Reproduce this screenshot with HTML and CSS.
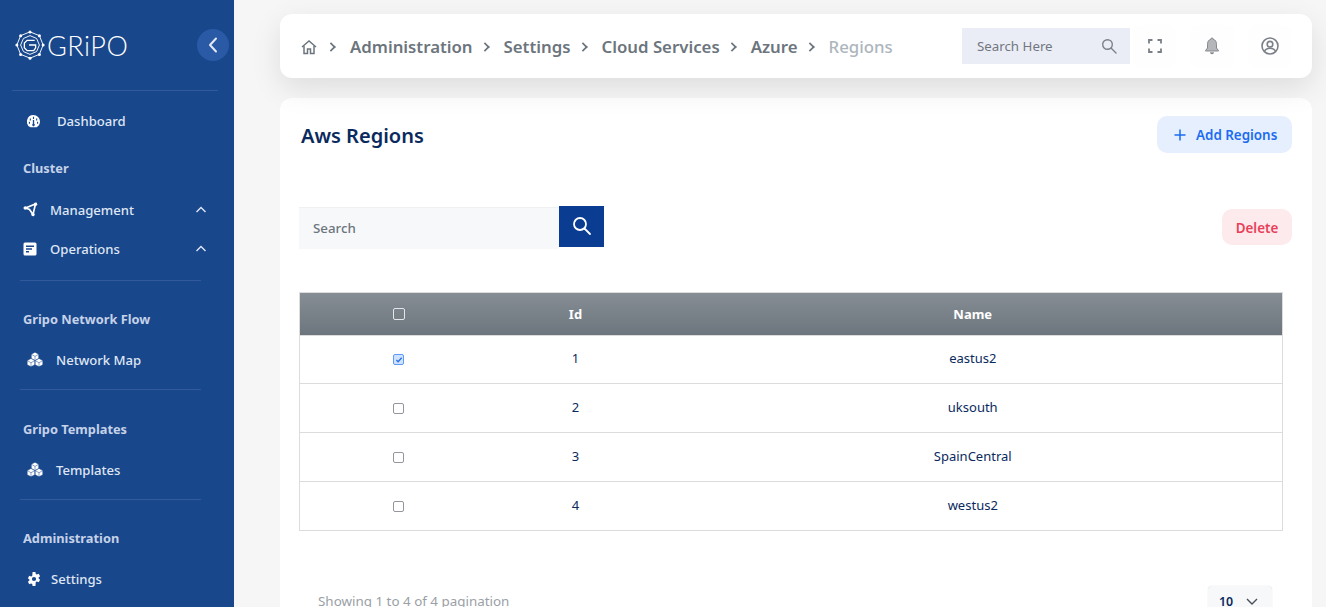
FILE: index.html
```html
<!DOCTYPE html>
<html>
<head>
	<meta charset="utf-8">
	<title>Aws Regions</title>
	<link rel="stylesheet" href="styles.css">
</head>
<body>
	<div class="layout">
		<aside class="sidebar">
			<div class="brand">
				<svg class="brand-mark" width="30" height="30" viewBox="0 0 32 32" fill="none" stroke="#fff" stroke-width="1">
					<polygon points="16,2 26,6 30,16 26,26 16,30 6,26 2,16 6,6"/>
					<polygon points="16,6 23,9 26,16 23,23 16,26 9,23 6,16 9,9"/>
					<path d="M21 11H13L10 14V19L13 22H20L22 19V16H15" stroke-width="1.4"/>
					<g fill="#fff" stroke="none">
						<circle cx="16" cy="2" r="1.6"/><circle cx="26" cy="6" r="1.6"/><circle cx="30" cy="16" r="1.6"/><circle cx="26" cy="26" r="1.6"/>
						<circle cx="16" cy="30" r="1.6"/><circle cx="6" cy="26" r="1.6"/><circle cx="2" cy="16" r="1.6"/><circle cx="6" cy="6" r="1.6"/>
					</g>
				</svg>
				<span class="brand-name">GRiPO</span>
				<button class="collapse">
					<svg width="12" height="16" viewBox="0 0 12 16" fill="none" stroke="#e3eaf6" stroke-width="2" stroke-linecap="round" stroke-linejoin="round"><path d="M9 1.500L3 8l6 6.500"/></svg>
				</button>
			</div>

			<div class="group group-first">
				<a class="item item-dash">
					<svg class="ico" width="13" height="13" viewBox="0 0 14 14"><path fill="#fff" fill-rule="evenodd" d="M7 0a7 7 0 0 1 7 7c0 2.700-1.500 5-3.700 6.200H3.700A7 7 0 0 1 7 0zM6.400 1.800v2.400h1.200V1.800zM3 3.800v2h1.200v-2zM9.800 3.800v2H11v-2zM2 7.300v2h1.200v-2zM10.800 7.300v2H12v-2zM6.300 5.500v4a1.300 1.300 0 1 0 1.400 0v-4z"/></svg>
					<span>Dashboard</span>
				</a>
				<div class="title title-cluster">Cluster</div>
				<a class="item item-man">
					<svg class="ico" width="15" height="15" viewBox="0 0 15 15" fill="none" stroke="#fff" stroke-width="1.700"><path d="M2.500 6L12.500 2L10 12.500L6.500 7.500Z"/><circle cx="12.500" cy="2.300" r="1.700" fill="#fff" stroke="none"/><circle cx="2.300" cy="6" r="1.700" fill="#fff" stroke="none"/><circle cx="10" cy="12.500" r="1.700" fill="#fff" stroke="none"/></svg>
					<span>Management</span>
					<svg class="caret" width="12" height="7" viewBox="0 0 12 7" fill="none" stroke="#dfe6f3" stroke-width="1.400"><path d="M1.500 6L6 1.500 10.500 6"/></svg>
				</a>
				<a class="item item-ops">
					<svg class="ico" width="14" height="14" viewBox="0 0 14 14"><path fill="#fff" fill-rule="evenodd" d="M2 .5h10A1.500 1.500 0 0 1 13.500 2v10a1.500 1.500 0 0 1-1.500 1.500H2A1.500 1.500 0 0 1 .5 12V2A1.500 1.500 0 0 1 2 .5zM3 3.500V5h8V3.500zM3 6.300v1.500h6V6.300zM3 9.100v1.500h3V9.100z"/></svg>
					<span>Operations</span>
					<svg class="caret" width="12" height="7" viewBox="0 0 12 7" fill="none" stroke="#dfe6f3" stroke-width="1.400"><path d="M1.500 6L6 1.500 10.500 6"/></svg>
				</a>
			</div>

			<div class="group">
				<div class="title">Gripo Network Flow</div>
				<a class="item item-cube">
					<svg class="ico" width="16" height="15" viewBox="0 0 16 15" fill="#fff" stroke="#19478c" stroke-width="0.500">
						<path d="M8 .2l3.700 2.100v4.200L8 8.600 4.300 6.500V2.300z"/><path d="M4.300 2.300L8 4.400l3.700-2.100M8 4.400v4.200" fill="none"/>
						<path d="M4 6.400l3.800 2.200v4.100L4 14.800.2 12.700V8.600z"/><path d="M.2 8.600L4 10.700l3.800-2.100M4 10.700v4.100" fill="none"/>
						<path d="M12 6.400l3.800 2.200v4.100L12 14.800l-3.800-2.100V8.600z"/><path d="M8.200 8.600l3.800 2.100 3.800-2.100M12 10.700v4.100" fill="none"/>
					</svg>
					<span>Network Map</span>
				</a>
			</div>

			<div class="group group-mid">
				<div class="title">Gripo Templates</div>
				<a class="item item-cube">
					<svg class="ico" width="16" height="15" viewBox="0 0 16 15" fill="#fff" stroke="#19478c" stroke-width="0.500">
						<path d="M8 .2l3.700 2.100v4.200L8 8.600 4.300 6.500V2.300z"/><path d="M4.300 2.300L8 4.400l3.700-2.100M8 4.400v4.200" fill="none"/>
						<path d="M4 6.400l3.800 2.200v4.100L4 14.800.2 12.700V8.600z"/><path d="M.2 8.600L4 10.700l3.800-2.100M4 10.700v4.100" fill="none"/>
						<path d="M12 6.400l3.800 2.200v4.100L12 14.800l-3.800-2.100V8.600z"/><path d="M8.200 8.600l3.800 2.100 3.800-2.100M12 10.700v4.100" fill="none"/>
					</svg>
					<span>Templates</span>
				</a>
			</div>

			<div class="group group-last">
				<div class="title">Administration</div>
				<a class="item item-gear">
					<svg class="ico" width="14" height="14" viewBox="0 0 14 14">
						<path fill="#fff" fill-rule="evenodd" d="M5.600 0h2.800l.4 1.900 1.100.6 1.800-.7 1.400 2.400-1.500 1.300v1l1.500 1.300-1.400 2.400-1.800-.7-1.100.6L8.400 14H5.600l-.4-1.900-1.100-.6-1.800.7L.9 9.800l1.500-1.300v-1L.9 6.200l1.400-2.400 1.800.7 1.100-.6zM7 4.900a2.100 2.100 0 1 0 0 4.200 2.100 2.100 0 0 0 0-4.200z"/>
					</svg>
					<span>Settings</span>
				</a>
			</div>
		</aside>

		<main class="main">
			<header class="topbar">
				<nav class="crumbs">
					<svg class="crumb-home" width="16" height="16" viewBox="0 0 16 16" fill="none" stroke="#6c757d" stroke-width="1.500"><path d="M1 8l7-6 7 6"/><path d="M3 7v7.500h3.500V10h3v4.500H13V7"/></svg>
					<span class="sep"></span>
					<a>Administration</a>
					<span class="sep"></span>
					<a>Settings</a>
					<span class="sep"></span>
					<a>Cloud Services</a>
					<span class="sep"></span>
					<a>Azure</a>
					<span class="sep"></span>
					<a class="crumb-now">Regions</a>
				</nav>
				<div class="top-search">
					<span>Search Here</span>
					<svg width="16" height="16" viewBox="0 0 16 16" fill="none" stroke="#7b8088" stroke-width="1.400"><circle cx="6.500" cy="6.500" r="4.800"/><path d="M10 10l5 5" stroke-linecap="round"/></svg>
				</div>
				<div class="top-icons">
					<button class="top-btn">
						<svg width="14" height="14" viewBox="0 0 14 14" fill="none" stroke="#7b8088" stroke-width="1.800"><path d="M1 4.500V1h3.500M9.500 1H13v3.500M13 9.500V13H9.500M4.500 13H1V9.500"/></svg>
					</button>
					<button class="top-btn">
						<svg width="16" height="18" viewBox="0 0 16 18"><path fill="#b4b6ba" stroke="#85888e" stroke-width="1" d="M8 1a1 1 0 0 1 1 1.200C11.600 2.800 12.500 5 12.500 7.500V11l2 2.500v.5h-13v-.5l2-2.500V7.500C3.500 5 4.400 2.800 7 2.200A1 1 0 0 1 8 1z"/><path fill="#85888e" d="M6 15.300h4a2 2 0 0 1-4 0z"/></svg>
					</button>
					<button class="top-btn">
						<svg width="18" height="18" viewBox="0 0 18 18" fill="none" stroke="#7b8088" stroke-width="1.600"><circle cx="9" cy="9" r="8"/><circle cx="9" cy="7.200" r="2.800"/><path d="M3.500 14.500c1-2.500 3-3.200 5.500-3.200s4.500.7 5.500 3.200"/></svg>
					</button>
				</div>
			</header>

			<section class="card">
				<div class="card-head">
					<h1>Aws Regions</h1>
					<button class="btn-add">
						<svg width="12" height="12" viewBox="0 0 12 12" stroke="#1a6cf0" stroke-width="1.500"><path d="M6 .5v11M.5 6h11"/></svg>
						<span>Add Regions</span>
					</button>
				</div>

				<div class="tools">
					<div class="search">
						<div class="search-box">Search</div>
						<button class="search-btn">
							<svg width="20" height="20" viewBox="0 0 20 20" fill="none" stroke="#fff" stroke-width="1.800"><circle cx="8" cy="8" r="6"/><path d="M12.500 12.500L18 18" stroke-linecap="round"/></svg>
						</button>
					</div>
					<button class="btn-del">Delete</button>
				</div>

				<table class="grid">
					<thead>
						<tr>
							<th class="c-check"><span class="check check-head"></span></th>
							<th class="c-id">Id</th>
							<th class="c-name">Name</th>
						</tr>
					</thead>
					<tbody>
						<tr class="row-first">
							<td><span class="check check-on"><svg width="8" height="8" viewBox="0 0 9 9" fill="none" stroke="#2a6ee0" stroke-width="1.400"><path d="M1.500 4.500l2 2 4-4.500"/></svg></span></td>
							<td>1</td>
							<td class="c-name">eastus2</td>
						</tr>
						<tr>
							<td><span class="check"></span></td>
							<td>2</td>
							<td class="c-name">uksouth</td>
						</tr>
						<tr>
							<td><span class="check"></span></td>
							<td>3</td>
							<td class="c-name">SpainCentral</td>
						</tr>
						<tr>
							<td><span class="check"></span></td>
							<td>4</td>
							<td class="c-name">westus2</td>
						</tr>
					</tbody>
				</table>

				<div class="foot">
					<span class="foot-info">Showing 1 to 4 of 4 pagination</span>
					<div class="page-size">
						<span>10</span>
						<svg width="12" height="7" viewBox="0 0 12 7" fill="none" stroke="#4a4f57" stroke-width="1.400"><path d="M1 1l5 5 5-5"/></svg>
					</div>
				</div>
			</section>
		</main>
	</div>
</body>
</html>
```

FILE: styles.css
```css
*{
	margin: 0;
	padding: 0;
	box-sizing: border-box;
}

html,body{
	height: 100%;
	overflow: hidden;
}
body{
	font-family: "Noto Sans", "Open Sans", sans-serif;
	background: #f6f6f6;
}
button{
	border: 0;
	font-family: inherit;
	background: none;
}

.layout{
	display: flex;
	height: 607px;
	overflow: hidden;
}

/* sidebar */
.sidebar{
	width: 234px;
	flex: none;
	background: #19478c;
	overflow: hidden;
}
.brand{
	display: flex;
	align-items: center;
	height: 91px;
	margin: 0 16px 0 12px;
	padding-left: 3px;
	border-bottom: 1px solid #31599b;
}
.brand-name{
	margin-left: 2px;
	font-family: "Lato", sans-serif;
	font-size: 27px;
	font-weight: 300;
	letter-spacing: 0.5px;
	color: #fff;
}
.collapse{
	display: flex;
	align-items: center;
	justify-content: center;
	width: 32px;
	height: 32px;
	margin-left: auto;
	margin-right: -11px;
	border-radius: 50%;
	background: #2a5aa5;
}

.group{
	margin: 0 33px 0 20px;
	padding: 23px 0 10px;
	border-bottom: 1px solid #31599b;
}
.group-first{
	padding-top: 10px;
	padding-bottom: 12px;
}
.group-mid{
	padding-top: 24px;
}
.group-last{
	border-bottom: 0;
}
.title{
	display: flex;
	align-items: center;
	height: 30px;
	margin-bottom: 6px;
	padding-left: 3px;
	font-size: 12.8px;
	font-weight: 700;
	color: #c5d2e8;
}
.title-cluster{
	margin-top: 12px;
	margin-bottom: 7px;
}
.item{
	display: flex;
	align-items: center;
	height: 39px;
	font-size: 13.1px;
	font-weight: 500;
	color: #dfe6f3;
}
.item-dash{
	padding-left: 7px;
	height: 40px;
}
.item-dash span{
	margin-left: 17px;
}
.item-man{
	padding-left: 3px;
}
.item-man span{
	margin-left: 12px;
}
.item-ops{
	padding-left: 3px;
}
.item-ops span{
	margin-left: 13px;
}
.item-cube{
	padding-left: 7px;
}
.item-cube span{
	margin-left: 13px;
}
.item-gear{
	padding-left: 7px;
}
.item-gear span{
	margin-left: 10px;
}
.caret{
	margin-left: auto;
	margin-right: -6px;
}

/* main */
.main{
	flex: 1;
	padding: 14px 14px 0 46px;
	min-width: 0;
}
.topbar{
	position: relative;
	z-index: 1;
	display: flex;
	align-items: center;
	height: 64px;
	padding-left: 21px;
	background: #fff;
	border-radius: 12px;
	box-shadow: 0 10px 30px rgba(0,0,0,0.1);
}
.crumbs{
	display: flex;
	align-items: center;
	flex: 1;
	font-size: 16.8px;
	font-weight: 600;
	color: #6c757d;
}
.crumb-home{
	margin-top: 2px;
	margin-right: 2px;
}
.sep{
	width: 8px;
	height: 8px;
	margin: 0 15px 0 8px;
	border-top: 2px solid #6c757d;
	border-right: 2px solid #6c757d;
	transform: translateY(1px) scale(0.85) rotate(45deg);
}
.crumb-now{
	font-weight: 500;
	color: #adb5bd;
}
.top-search{
	display: flex;
	align-items: center;
	justify-content: space-between;
	width: 168px;
	height: 36px;
	padding: 0 13px 0 15px;
	background: #eaedf5;
	font-size: 13.3px;
	color: #72777f;
}
.top-icons{
	display: flex;
	align-items: center;
	gap: 14.5px;
	margin: 0 21px 0 3px;
}
.top-btn{
	display: flex;
	align-items: center;
	justify-content: center;
	width: 43px;
	height: 43px;
	border-radius: 8px;
	background: #fefefe;
}

.card{
	margin-top: 20px;
	height: 560px;
	padding: 18px 20px 0 19px;
	background: #fff;
	border-radius: 12px;
}
.card-head{
	display: flex;
	align-items: center;
	justify-content: space-between;
	height: 37px;
	padding-left: 2px;
}
.card-head h1{
	padding-top: 2px;
	font-size: 20px;
	font-weight: 600;
	color: #0a2a5e;
}
.btn-add{
	display: flex;
	align-items: center;
	gap: 10px;
	width: 135px;
	height: 37px;
	padding-left: 17px;
	border-radius: 10px;
	background: #e6effd;
	font-size: 13.4px;
	font-weight: 600;
	color: #1a6cf0;
}
.tools{
	display: flex;
	align-items: center;
	justify-content: space-between;
	margin-top: 53px;
	height: 42px;
}
.search{
	display: flex;
	align-items: flex-start;
}
.search-box{
	display: flex;
	align-items: center;
	width: 260px;
	height: 42px;
	margin-top: 1px;
	padding-left: 14px;
	background: #f7f8fa;
	box-shadow: inset 0 1px 0 #eef0f2;
	font-size: 13.3px;
	font-weight: 500;
	color: #6c757d;
}
.search-btn{
	display: flex;
	align-items: center;
	justify-content: center;
	width: 45px;
	height: 41px;
	background: #0a3d91;
}
.btn-del{
	width: 70px;
	height: 36px;
	padding-top: 2px;
	border-radius: 10px;
	background: #fdeaec;
	font-size: 13.4px;
	font-weight: 600;
	color: #e8405a;
}

.grid{
	width: 984px;
	margin-top: 44px;
	border-collapse: collapse;
	table-layout: fixed;
	font-size: 13px;
	color: #0a2a5e;
}
.grid th,.grid td{
	text-align: center;
	border-top: 1px solid #dcdcdc;
	border-bottom: 1px solid #dcdcdc;
}
.grid td{
	padding-bottom: 3px;
}
.grid tr th:first-child,.grid tr td:first-child{
	border-left: 1px solid #dcdcdc;
}
.grid tr th:last-child,.grid tr td:last-child{
	border-right: 1px solid #dcdcdc;
}
.grid thead tr{
	height: 43px;
	background: linear-gradient(#868d94, #6c757d);
	color: #fff;
	font-weight: 800;
}
.grid tbody tr{
	height: 49px;
}
.grid tbody .row-first{
	height: 48px;
}
.c-check{
	width: 198px;
}
.c-id{
	width: 156px;
}
.grid .c-name{
	padding-left: 10px;
}
.check{
	display: inline-flex;
	align-items: center;
	justify-content: center;
	width: 11px;
	height: 11px;
	vertical-align: middle;
	border: 1.5px solid #93979d;
	border-radius: 2px;
	background: #fff;
}
.check-head{
	border-color: #e4e6e9;
	background: transparent;
	width: 12px;
	height: 12px;
	margin-bottom: 2px;
}
.check-on{
	border-color: #5c9bfa;
	background: #cfe2ff;
}

.foot{
	display: flex;
	justify-content: space-between;
	margin-top: 55px;
	padding: 0 20px 0 19px;
}
.foot-info{
	margin-top: 6px;
	font-size: 13.4px;
	color: #9aa0a6;
}
.page-size{
	display: flex;
	align-items: center;
	justify-content: space-between;
	width: 64px;
	height: 30px;
	padding: 0 14px 0 11px;
	border-radius: 4px;
	background: #f7f8fa;
	box-shadow: 0 0 1px rgba(0,0,0,0.2);
	font-size: 12.4px;
	font-weight: 600;
	color: #0a2a5e;
}
```
